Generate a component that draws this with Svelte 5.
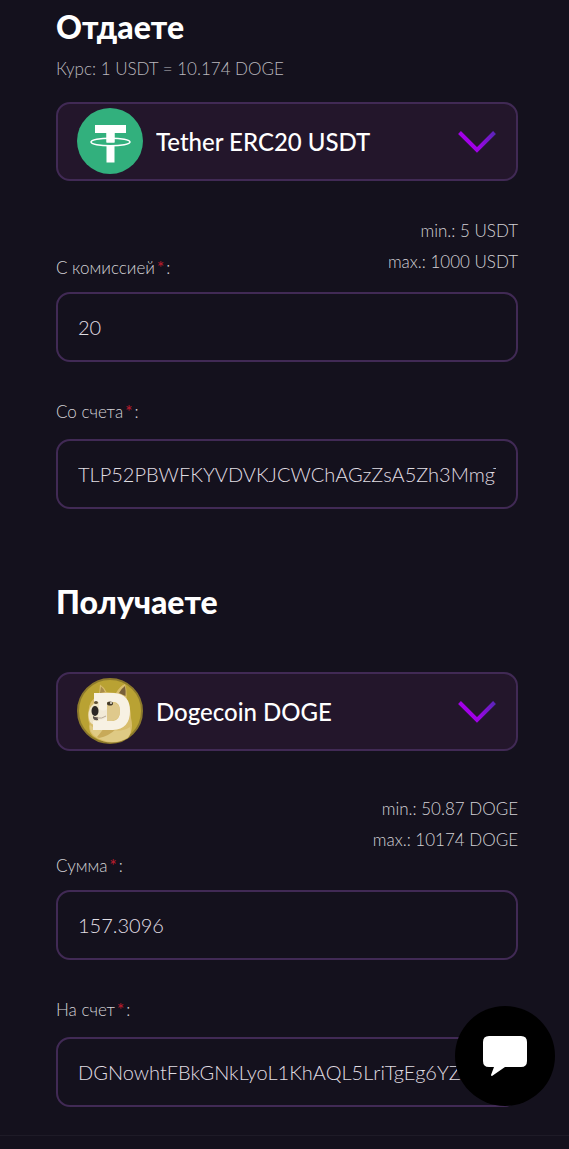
<script>
    let giveCurrency = 'usdt';
    let getCurrency = 'doge';
    let giveAmount = '20';
    let giveAccount = 'TLP52PBWFKYVDVKJCWChAGzZsA5Zh3MmgT';
    let getAmount = '157.3096';
    let getAccount = 'DGNowhtFBkGNkLyoL1KhAQL5LriTgEg6YZ';
</script>

<svelte:head>
    <title>Обмен</title>
</svelte:head>

<form class="exchange">
    <section>
        <h2>Отдаете</h2>
        <p class="rate">Курс: 1 USDT = 10.174 DOGE</p>

        <div class="currency">
            <svg class="coin" viewBox="0 0 66 66" aria-hidden="true">
                <circle cx="33" cy="33" r="33" fill="#32b07d" />
                <path d="M18 17h31v8H37.500v29.500h-8V25H18z" fill="#fff" />
                <path d="M28 34.500h11v2.500H28z" fill="#32b07d" />
                <ellipse cx="33.500" cy="34" rx="19.500" ry="3.800" fill="none" stroke="#fff" stroke-width="1.500" />
                <path d="M29.500 25h8v9.500h-8z" fill="#fff" />
            </svg>
            <select bind:value={giveCurrency} aria-label="Отдаете">
                <option value="usdt">Tether ERC20 USDT</option>
            </select>
            <svg class="arrow" viewBox="0 0 38 22" aria-hidden="true">
                <defs>
                    <linearGradient id="arrow-give" x1="0" y1="0" x2="1" y2="0">
                        <stop offset="0.5" stop-color="#a200e8" />
                        <stop offset="1" stop-color="#5a25b8" />
                    </linearGradient>
                </defs>
                <path d="M1.500 1.500 19 19 36.500 1.500" fill="none" stroke="url(#arrow-give)" stroke-width="4" />
            </svg>
        </div>

        <div class="head inline">
            <label for="give-amount">С комиссией<span class="star">*</span>:</label>
            <div class="limits">
                <div>min.: 5 USDT</div>
                <div>max.: 1000 USDT</div>
            </div>
        </div>
        <input id="give-amount" type="text" bind:value={giveAmount} />

        <div class="head account">
            <label for="give-account">Со счета<span class="star">*</span>:</label>
        </div>
        <input id="give-account" type="text" bind:value={giveAccount} />
    </section>

    <section class="get">
        <h2>Получаете</h2>

        <div class="currency">
            <svg class="coin" viewBox="0 0 66 66" aria-hidden="true">
                <circle cx="33" cy="33" r="32" fill="#b9a233" stroke="#8d7a2c" stroke-width="2" />
                <path d="M22 17 23 6.500Q27 9 29.500 14L39 15Q43 8 48 6Q50 11 49.500 20Q54 30 54 40Q57 52 51 60Q33 70 16 58Q11 53 12.500 46Q10 40 11.500 33Q12 22 22 17z" fill="#d8bd6c" />
                <path d="M42 15Q45 10 48 8Q49 13 48.500 18z" fill="#79613a" />
                <path d="M23 15 24 8.500Q27 11 28 14z" fill="#a88b4a" />
                <path d="M13 30Q17 23 24 24L31 34Q32 43 27 47Q18 50 13 44Q10 37 13 30z" fill="#efe5c9" />
                <path d="M13 47Q21 54 30 50Q42 56 53 49Q55 56 50 60Q35 69 18 58Q12 53 13 47z" fill="#dfca84" />
                <path d="M20 59Q25 53 27 50Q33 53 39 51Q32 58 22 60z" fill="#c8aa59" />
                <path d="M17 15h20Q53 16 53 33Q53 51 36 52H16v-9h6V24h-5zM31 24v19h5Q43 42 43 33Q43 24 36 24z" fill="#f7f1e3" fill-rule="evenodd" />
                <path d="M30 24h5q8 1 8 9t-8 10h-5z" fill="#dfc98c" />
                <path d="M22 31Q27 34 30 31V39Q26 43 21 41z" fill="#f2ead7" />
                <ellipse cx="18" cy="33" rx="3.500" ry="5" fill="#2b2725" />
                <path d="M16 38q3 2 5 1v3q-4 1-5-2z" fill="#5c534c" />
                <path d="M20 40q5 1 9-2" fill="none" stroke="#b9aa99" stroke-width="1" />
                <ellipse cx="33" cy="25.500" rx="3" ry="2" fill="#433a2b" />
                <ellipse cx="19" cy="24.500" rx="2" ry="1.500" fill="#5f5138" />
                <circle cx="34" cy="25" r="1" fill="#e8e2d4" />
            </svg>
            <select bind:value={getCurrency} aria-label="Получаете">
                <option value="doge">Dogecoin DOGE</option>
            </select>
            <svg class="arrow" viewBox="0 0 38 22" aria-hidden="true">
                <defs>
                    <linearGradient id="arrow-get" x1="0" y1="0" x2="1" y2="0">
                        <stop offset="0.5" stop-color="#a200e8" />
                        <stop offset="1" stop-color="#5a25b8" />
                    </linearGradient>
                </defs>
                <path d="M1.500 1.500 19 19 36.500 1.500" fill="none" stroke="url(#arrow-get)" stroke-width="4" />
            </svg>
        </div>

        <div class="head stacked">
            <div class="limits">
                <div>min.: 50.87 DOGE</div>
                <div>max.: 10174 DOGE</div>
            </div>
            <label for="get-amount">Сумма<span class="star">*</span>:</label>
        </div>
        <input id="get-amount" type="text" bind:value={getAmount} />

        <div class="head account">
            <label for="get-account">На счет<span class="star">*</span>:</label>
        </div>
        <input id="get-account" type="text" bind:value={getAccount} />
    </section>
</form>

<button class="chat" type="button" aria-label="Чат">
    <svg viewBox="0 0 44 40" aria-hidden="true">
        <path d="M6 0h32q6 0 6 6v19q0 6-6 6H22L9 40Q8 40 8 39L11 31H6q-6 0-6-6V6q0-6 6-6z" fill="#fff" />
    </svg>
</button>

<style>
    :global(body) {
        background-color: #14111d;
    }

    .exchange {
        padding: 9px 51px 28px 56px;
        border-bottom: 1px solid #1e1b27;
        font-family: Lato, "Open Sans", sans-serif;
        font-weight: 300;
        color: #d3d1d6;
    }

    .get {
        margin-top: 75px;
    }

    h2 {
        margin: 0;
        font-size: 32px;
        font-weight: 900;
        line-height: 36px;
        color: #fff;
    }

    .rate {
        margin: 12px 0 21px;
        font-size: 17px;
        line-height: 24px;
        color: #bab8be;
    }

    .currency {
        position: relative;
    }

    .get .currency {
        margin-top: 52px;
    }

    select,
    input {
        display: block;
        box-sizing: border-box;
        width: 100%;
        border: 2px solid #412a55;
        border-radius: 14px;
        font-family: inherit;
        outline: none;
    }

    select {
        height: 79px;
        padding: 0 70px 0 98px;
        appearance: none;
        background-color: #23162b;
        font-size: 24px;
        font-weight: 500;
        color: #fff;
    }

    input {
        height: 70px;
        padding: 0 20px;
        background-color: transparent;
        font-size: 20px;
        font-weight: 300;
        color: #e0dee3;
    }

    .coin {
        position: absolute;
        top: 6px;
        left: 21px;
        width: 66px;
        height: 66px;
        pointer-events: none;
    }

    .arrow {
        position: absolute;
        top: 29px;
        right: 22px;
        width: 38px;
        height: 22px;
        pointer-events: none;
    }

    .head {
        margin-bottom: 13px;
        font-size: 17px;
        line-height: 22px;
    }

    .inline {
        display: flex;
        justify-content: space-between;
        align-items: flex-end;
        margin-top: 34px;
    }

    .inline .limits {
        margin-bottom: 2px;
    }

    .stacked {
        margin-top: 42px;
    }

    .account {
        margin-top: 39px;
        margin-bottom: 16px;
    }

    .limits {
        line-height: 31px;
        text-align: right;
    }

    .star {
        margin: 0 2px;
        font-weight: 500;
        color: #b51c2c;
    }

    .chat {
        position: fixed;
        right: 14px;
        bottom: 43px;
        display: flex;
        align-items: center;
        justify-content: center;
        width: 100px;
        height: 100px;
        padding: 0;
        border: none;
        border-radius: 50%;
        background-color: #000;
    }

    .chat svg {
        width: 44px;
        height: 40px;
    }
</style>
